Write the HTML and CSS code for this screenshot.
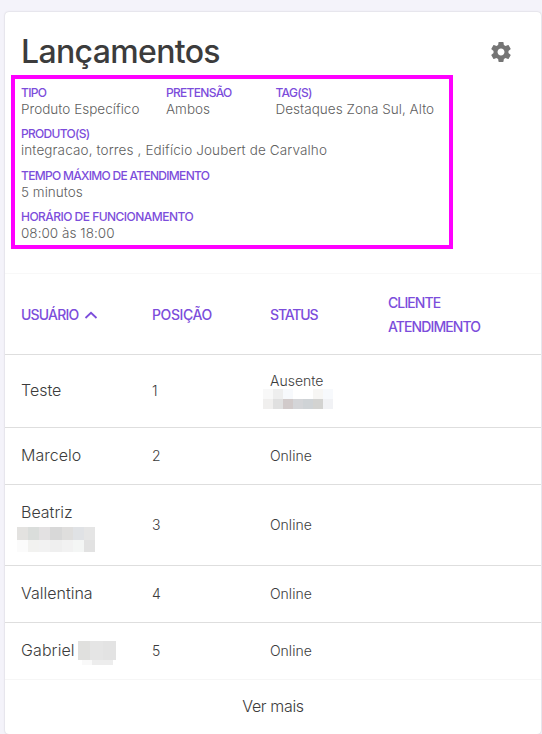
FILE: index.html
```html
<!DOCTYPE html>
<html lang="pt-BR">
<head>
  <meta charset="UTF-8" />
  <meta name="viewport" content="width=device-width, initial-scale=1.0"/>
  <title>Lançamentos</title>
  <link rel="stylesheet" href="styles.css">
</head>
<body>
  <div class="card">
    <div class="card-header">
      <h1>Lançamentos</h1>
      <svg class="gear" viewBox="0 0 24 24" width="24" height="24">
        <path fill="#757575" d="M19.43 12.98c.04-.32.07-.64.07-.98s-.03-.66-.07-.98l2.11-1.65c.19-.15.24-.42.12-.64l-2-3.46c-.12-.22-.39-.3-.61-.22l-2.49 1c-.52-.4-1.08-.73-1.69-.98l-.38-2.65C14.46 2.18 14.25 2 14 2h-4c-.25 0-.46.18-.49.42l-.38 2.65c-.61.25-1.17.59-1.69.98l-2.49-1c-.23-.09-.49 0-.61.22l-2 3.46c-.13.22-.07.49.12.64l2.11 1.65c-.04.32-.07.65-.07.98s.03.66.07.98l-2.11 1.65c-.19.15-.24.42-.12.64l2 3.46c.12.22.39.3.61.22l2.49-1c.52.4 1.08.73 1.69.98l.38 2.65c.03.24.24.42.49.42h4c.25 0 .46-.18.49-.42l.38-2.65c.61-.25 1.17-.59 1.69-.98l2.49 1c.23.09.49 0 .61-.22l2-3.46c.12-.22.07-.49-.12-.64l-2.11-1.65zM12 15.5c-1.93 0-3.5-1.57-3.5-3.5s1.57-3.5 3.5-3.5 3.5 1.57 3.5 3.5-1.57 3.5-3.5 3.5z"/>
      </svg>
    </div>

    <div class="info">
      <div class="info-row">
        <div class="info-item tipo"><span class="label">TIPO</span><span class="value">Produto Específico</span></div>
        <div class="info-item pretensao"><span class="label">PRETENSÃO</span><span class="value">Ambos</span></div>
        <div class="info-item"><span class="label">TAG(S)</span><span class="value">Destaques Zona Sul, Alto</span></div>
      </div>
      <div class="info-item"><span class="label">PRODUTO(S)</span><span class="value produtos">integracao, torres , Edifício Joubert de Carvalho</span></div>
      <div class="info-item"><span class="label">TEMPO MÁXIMO DE ATENDIMENTO</span><span class="value">5 minutos</span></div>
      <div class="info-item"><span class="label hours">HORÁRIO DE FUNCIONAMENTO</span><span class="value">08:00 às 18:00</span></div>
    </div>

    <div class="table">
      <div class="row head">
        <div class="cell user">USUÁRIO
          <svg class="arrow" viewBox="0 0 14 8" width="14" height="8"><path d="M1.5 7 L7 1.8 L12.5 7" fill="none" stroke="#7c4ddb" stroke-width="1.8"/></svg>
        </div>
        <div class="cell position">POSIÇÃO</div>
        <div class="cell status">STATUS</div>
        <div class="cell client">CLIENTE<br>ATENDIMENTO</div>
      </div>
      <div class="row tall-1">
        <div class="cell user">Teste</div>
        <div class="cell">1</div>
        <div class="cell status-away">
          <span>Ausente</span>
          <div class="blur blur-status">
            <i class="c1"></i><i class="c2"></i><i class="c3"></i><i></i><i></i><i class="c4"></i><i class="c3"></i>
            <i class="c5"></i><i class="c6"></i><i class="c7"></i><i class="c8"></i><i class="c9"></i><i class="c10"></i><i class="c11"></i>
          </div>
        </div>
        <div class="cell client"></div>
      </div>
      <div class="row">
        <div class="cell user">Marcelo</div>
        <div class="cell">2</div>
        <div class="cell">Online</div>
        <div class="cell client"></div>
      </div>
      <div class="row tall-2">
        <div class="cell user beatriz">
          <span>Beatriz</span>
          <div class="blur blur-name">
            <i class="d1"></i><i class="d2"></i><i class="d3"></i><i class="d4"></i><i class="d5"></i><i class="d6"></i><i class="d7"></i>
            <i class="d8"></i><i class="d9"></i><i class="d10"></i><i class="d11"></i><i class="d10"></i><i class="d12"></i><i class="d13"></i>
          </div>
        </div>
        <div class="cell">3</div>
        <div class="cell">Online</div>
        <div class="cell client"></div>
      </div>
      <div class="row">
        <div class="cell user">Vallentina</div>
        <div class="cell">4</div>
        <div class="cell">Online</div>
        <div class="cell client"></div>
      </div>
      <div class="row last">
        <div class="cell user gabriel"><span>Gabriel</span>
          <div class="blur-last">
            <div class="strip top"><i class="e1"></i><i class="e2"></i><i class="e3"></i></div>
            <div class="strip bottom"><i class="e4"></i><i class="e5"></i><i class="e5"></i></div>
          </div>
        </div>
        <div class="cell">5</div>
        <div class="cell">Online</div>
        <div class="cell client"></div>
      </div>
    </div>

    <div class="more">Ver mais</div>
  </div>
</body>
</html>
```
FILE: styles.css
```css
* {
  margin: 0;
  padding: 0;
  box-sizing: border-box;
}

body {
  background: #f4f3fa;
  font-family: Inter, 'Liberation Sans', sans-serif;
  color: #3c3c3c;
  height: 734px;
  padding: 12px 1px 0 5px;
  overflow: hidden;
}

.card {
  height: 722px;
  background: #fff;
  border-radius: 4px;
  box-shadow: 0 0 2px rgba(0, 0, 0, .2);
}

.card-header {
  height: 63px;
  display: flex;
  align-items: center;
  justify-content: space-between;
  padding: 16px 28px 0 16px;
}

h1 {
  font-size: 32px;
  line-height: 40px;
  font-weight: 500;
  letter-spacing: -.65px;
}

.gear {
  width: 24px;
  height: 24px;
}

.info {
  width: 442px;
  height: 174px;
  margin-left: 6px;
  border: 4px solid #ff00ff;
  padding: 6px 0 0 6px;
  display: flex;
  flex-direction: column;
  gap: 8.4px;
}

.info-row {
  display: flex;
}

.info-item {
  display: flex;
  flex-direction: column;
  white-space: nowrap;
}

.tipo {
  width: 145px;
}

.pretensao {
  width: 109.5px;
}

.label {
  font-size: 12px;
  line-height: 16px;
  font-weight: 500;
  letter-spacing: -.7px;
  color: #7c4ddb;
}

.label.hours {
  letter-spacing: -.53px;
}

.value {
  font-size: 13.5px;
  line-height: 17px;
  font-weight: 300;
  letter-spacing: .03px;
  color: #606060;
}

.produtos {
  letter-spacing: .13px;
}

.table {
  margin-top: 24px;
  border-top: 1px solid #f8f8f8;
}

.row {
  display: flex;
  height: 57px;
  border-bottom: 1px solid #dedede;
}

.head {
  height: 81px;
}

.tall-1 {
  height: 73px;
}

.tall-2 {
  height: 81px;
}

.last {
  border-bottom-color: #f6f6f6;
}

.cell {
  width: 118px;
  padding: 0 0 1px 16px;
  display: flex;
  align-items: center;
  font-size: 14px;
  font-weight: 300;
}

.user {
  width: 131px;
  padding-bottom: 2px;
  font-size: 16px;
}

.client {
  flex: 1;
}

.head .cell {
  padding-bottom: 0;
  padding-top: 1px;
  font-size: 14px;
  line-height: 24px;
  font-weight: 500;
  letter-spacing: -.9px;
  color: #7c4ddb;
}

.head .user {
  letter-spacing: -.8px;
}

.head .position {
  letter-spacing: -.4px;
}

.head .status {
  letter-spacing: -1.15px;
}

.arrow {
  margin-left: 6px;
}

.status-away,
.beatriz {
  flex-direction: column;
  align-items: flex-start;
}

.status-away {
  padding-top: 17px;
}

.status-away span {
  line-height: 18px;
}

.beatriz {
  padding-top: 16px;
}

.beatriz span {
  line-height: 22px;
}

.blur {
  display: grid;
}

.blur-status {
  grid-template-columns: repeat(7, 10px);
  grid-template-rows: 10px 10px;
  margin-left: -7px;
  margin-top: -1px;
}

.blur-name {
  grid-template-columns: repeat(7, 11.15px);
  grid-template-rows: 13px 12px;
  margin-left: -4px;
  margin-top: 4px;
}

.c1 { background: #f8f8f8; }
.c2 { background: #eeeeee; }
.c3 { background: #f7f9fc; }
.c4 { background: #f7f6f4; }
.c5 { background: #f0efee; }
.c6 { background: #e0e0e0; }
.c7 { background: #d1caca; }
.c8 { background: #d4d5d8; }
.c9 { background: #cfd3d6; }
.c10 { background: #d3d3d1; }
.c11 { background: #f1f2f5; }

.d1 { background: #e3e2e0; }
.d2 { background: #dadddb; }
.d3 { background: #e3e1e2; }
.d4 { background: #d8d8d8; }
.d5 { background: #dfdedd; }
.d6 { background: #e0e2e5; }
.d7 { background: #e5e5e5; }
.d8 { background: #fbfbfb; }
.d9 { background: #f2f2f0; }
.d10 { background: #f2f2f2; }
.d11 { background: #efefef; }
.d12 { background: #f4f6f5; }
.d13 { background: #e2e2e2; }

.gabriel span {
  letter-spacing: .1px;
}

.blur-last {
  margin: 5px 0 0 3px;
}

.strip {
  display: flex;
}

.strip.top i {
  width: 12.7px;
  height: 19px;
}

.strip.bottom {
  padding-left: 4px;
}

.strip.bottom i {
  width: 10.3px;
  height: 5px;
}

.e1 { background: #e0e0de; }
.e2 { background: #e5e5e5; }
.e3 { background: #e3e3e3; }
.e4 { background: #f9f9f9; }
.e5 { background: #ededed; }

.more {
  height: 54px;
  line-height: 53px;
  text-align: center;
  font-size: 16px;
  font-weight: 300;
  letter-spacing: -.35px;
}
```
